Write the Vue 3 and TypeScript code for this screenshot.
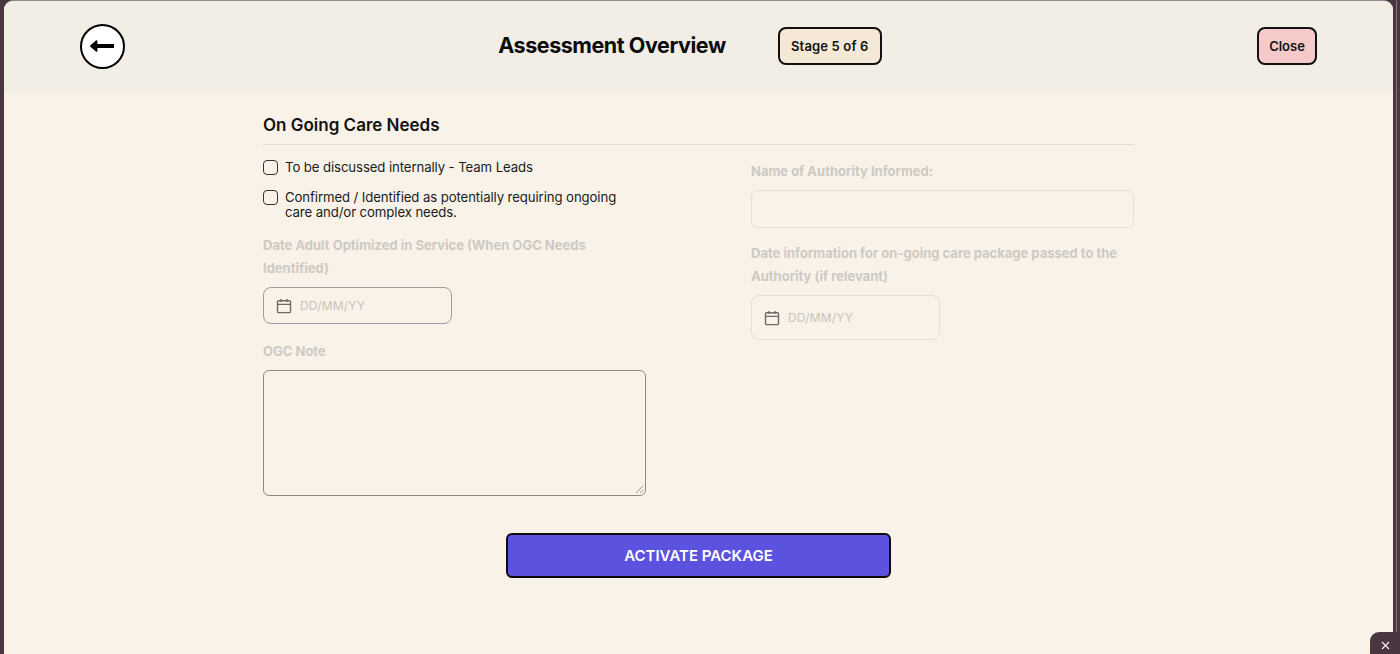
<script setup lang="ts">
const placeholder: string = 'DD/MM/YY'
</script>

<template>
  <div class="screen">
    <div class="panel">
      <header class="head">
        <button class="back" aria-label="Back">
          <svg width="26" height="14" viewBox="0 0 26 14">
            <path d="M6.5 2.2 L1 7 L6.5 11.8 Z" fill="#000" stroke="#000" stroke-width="1.8" stroke-linejoin="round" />
            <path d="M6 7 H24" stroke="#000" stroke-width="4" />
          </svg>
        </button>
        <div class="title-group">
          <h1>Assessment Overview</h1>
          <span class="stage">Stage 5 of 6</span>
        </div>
        <button class="close">Close</button>
      </header>

      <main class="content">
        <h2>On Going Care Needs</h2>
        <div class="cols">
          <section class="col">
            <label class="check first"><span class="box"></span><span>To be discussed internally - Team Leads</span></label>
            <label class="check second"><span class="box"></span><span>Confirmed / Identified as potentially requiring ongoing care and/or complex needs.</span></label>
            <div class="label date-label">Date Adult Optimized in Service (When OGC Needs Identified)</div>
            <div class="date active">
              <svg class="cal" width="16" height="16" viewBox="0 0 16 16" fill="none" stroke="currentColor" stroke-width="1.4">
                <rect x="1.5" y="2.8" width="13" height="11.8" rx="1.2" />
                <path d="M1.5 6.4 H14.5 M5 1 V4 M11 1 V4" />
              </svg>
              <span>{{ placeholder }}</span>
            </div>
            <div class="label note-label">OGC Note</div>
            <div class="note"><svg class="grip" width="9" height="9" viewBox="0 0 9 9"><path d="M1 8 L8 1 M5 8 L8 5" stroke="#8a867f" stroke-width="0.8" /></svg></div>
          </section>
          <section class="col right">
            <div class="label name-label">Name of Authority Informed:</div>
            <div class="input"></div>
            <div class="label info-label">Date information for on-going care package passed to the Authority (if relevant)</div>
            <div class="date">
              <svg class="cal" width="16" height="16" viewBox="0 0 16 16" fill="none" stroke="currentColor" stroke-width="1.4">
                <rect x="1.5" y="2.8" width="13" height="11.8" rx="1.2" />
                <path d="M1.5 6.4 H14.5 M5 1 V4 M11 1 V4" />
              </svg>
              <span>{{ placeholder }}</span>
            </div>
          </section>
        </div>
        <div class="actions"><button class="activate">ACTIVATE PACKAGE</button></div>
      </main>
    </div>
    <div class="tab">
      <svg width="9" height="9" viewBox="0 0 9 9"><path d="M1 1 L8 8 M8 1 L1 8" stroke="#f4eee8" stroke-width="1.2" /></svg>
    </div>
  </div>
</template>

<style>
html, body { margin: 0; background: #4a3640; }
</style>

<style scoped>
* { box-sizing: border-box; }
.screen {
  position: relative;
  width: 1400px;
  height: 654px;
  overflow: hidden;
  padding: 1px 7px 0 4px;
  background: linear-gradient(to left, #4a3640 0 3px, #85747d 3px 4px, #4a3640 4px);
  font-family: Inter, "Liberation Sans", sans-serif;
  color: #111;
}
.panel {
  height: 653px;
  background: #f9f2e9;
  border-radius: 9px 9px 0 0;
  overflow: hidden;
  box-shadow: 0 -1px 0 #8e8a8a;
}
.head {
  height: 91px;
  background: #f2eee6;
  display: flex;
  align-items: center;
  justify-content: space-between;
  padding: 0 76px;
  border-bottom: 1px solid #f1ebe2;
}
.back {
  width: 45px;
  height: 45px;
  padding: 0;
  display: flex;
  align-items: center;
  justify-content: center;
  border: 2px solid #000;
  border-radius: 50%;
  background: #fff;
}
.title-group { display: flex; align-items: center; gap: 52px; margin-left: -2px; }
h1 {
  margin: 0;
  padding-bottom: 2px;
  font-size: 21.5px;
  font-weight: 700;
  letter-spacing: -0.45px;
  color: #0b0b0b;
}
.stage {
  width: 104px;
  height: 38px;
  display: flex;
  align-items: center;
  justify-content: center;
  border: 2px solid #111;
  border-radius: 8px;
  background: #f6e8d6;
  font-size: 13px;
  font-weight: 600;
  letter-spacing: 0.15px;
}
.close {
  width: 60px;
  height: 38px;
  padding: 0;
  border: 2px solid #111;
  border-radius: 8px;
  background: #f7caca;
  font: 600 13px Inter, "Liberation Sans", sans-serif;
  color: #111;
}
.content { width: 871px; margin: 0 auto; padding-top: 22px; }
h2 {
  margin: 0;
  height: 31px;
  font-size: 17px;
  line-height: 22px;
  font-weight: 600;
  border-bottom: 1px solid #e2dcd3;
  color: #111;
}
.cols { display: flex; gap: 105px; }
.col { width: 383px; }
.check {
  display: flex;
  gap: 7px;
  width: 355px;
  font-size: 13.2px;
  line-height: 15px;
  letter-spacing: -0.1px;
  color: #1b1b1b;
}
.first { margin-top: 15px; }
.second { margin-top: 15px; }
.box {
  flex: none;
  width: 15px;
  height: 15px;
  border: 1.5px solid #333;
  border-radius: 4px;
}
.label {
  font-size: 13px;
  line-height: 23px;
  font-weight: 700;
  letter-spacing: 0;
  color: #cdcac3;
}
.date-label { margin-top: 14px; width: 360px; }
.date {
  width: 189px;
  height: 37px;
  margin-top: 7px;
  padding-left: 12px;
  display: flex;
  align-items: center;
  gap: 8px;
  border: 1px solid #e5e0d8;
  border-radius: 8px;
  font-size: 12px;
  color: #c6c3bc;
  letter-spacing: 0.2px;
}
.date .cal { color: #6f6b65; }
.date.active { border-color: #a39c9c; }
.note-label { margin-top: 16px; }
.note {
  position: relative;
  height: 126px;
  margin-top: 7px;
  border: 1px solid #8e8a82;
  border-radius: 6px;
}
.grip { position: absolute; right: 1px; bottom: 1px; }
.name-label { margin-top: 15px; }
.input {
  height: 38px;
  margin-top: 7px;
  border: 1px solid #e5e0d8;
  border-radius: 6px;
}
.info-label { margin-top: 14px; }
.right .date { height: 45px; margin-top: 7px; }
.actions { display: flex; justify-content: center; margin-top: 37px; }
.activate {
  width: 385px;
  height: 45px;
  border: 2px solid #0b0b0b;
  border-radius: 6px;
  background: #5c52e0;
  color: #fff;
  font: 600 15px Inter, "Liberation Sans", sans-serif;
}
.tab {
  position: absolute;
  right: 0;
  bottom: 0;
  width: 30px;
  height: 22px;
  padding: 9px 0 0 11px;
  display: flex;
  align-items: flex-start;
  background: #4a3640;
  border-top-left-radius: 9px;
}
</style>
